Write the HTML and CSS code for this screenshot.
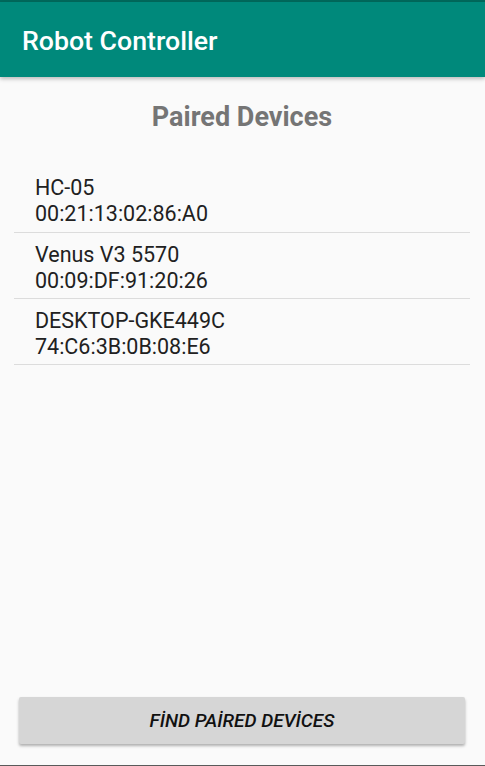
FILE: index.html
```html
<!DOCTYPE html>
<html lang="tr">
<head>
<meta charset="utf-8">
<link rel="stylesheet" href="styles.css">
</head>
<body>
<div class="app">
  <div class="status"></div>
  <header class="toolbar"><h1 class="title">Robot Controller</h1></header>
  <main class="content">
    <h2 class="heading">Paired Devices</h2>
    <ul class="list">
      <li class="item"><span>HC-05</span><span>00:21:13:02:86:A0</span></li>
      <li class="item"><span>Venus V3 5570</span><span>00:09:DF:91:20:26</span></li>
      <li class="item"><span>DESKTOP-GKE449C</span><span>74:C6:3B:0B:08:E6</span></li>
    </ul>
  </main>
  <div class="footer"><button class="btn">FİND PAİRED DEVİCES</button></div>
  <div class="bottom-line"></div>
</div>
</body>
</html>
```
FILE: styles.css
```css
* { box-sizing: border-box; }
html, body { margin: 0; padding: 0; }
body { background: #fafafa; font-family: Roboto, "Noto Sans", sans-serif; }
.app { width: 485px; height: 766px; display: flex; flex-direction: column; overflow: hidden; }
.status { height: 2px; background: #00695c; flex: none; }
.toolbar { height: 75px; background: #00897b; flex: none; display: flex; align-items: center; padding: 2px 22px 0; box-shadow: 0 2px 4px rgba(0,0,0,0.25); position: relative; z-index: 1; }
.title { margin: 0; color: #fff; font-size: 26.7px; font-weight: 500; letter-spacing: 0; }
.content { flex: 1; display: flex; flex-direction: column; padding: 0 15px 0 14px; }
.heading { margin: 25px 0 0; text-align: center; color: #757575; font-size: 27px; font-weight: 700; line-height: 30px; }
.list { list-style: none; margin: 34px 0 0; padding: 0; }
.item { display: flex; flex-direction: column; padding: 9px 0 0 21px; height: 66px; border-bottom: 1px solid #dcdcdc; color: #212121; font-size: 21.5px; line-height: 26px; }
.item:first-child { height: 67px; }
.footer { flex: none; padding: 0 20px 21px 19px; }
.btn { width: 100%; height: 47px; border: none; border-radius: 2px; background: #d6d6d6; box-shadow: 0 2px 3px rgba(0,0,0,0.3); font-family: Roboto, sans-serif; font-size: 19px; font-weight: 500; font-style: italic; color: #111; }
.bottom-line { height: 1px; background: #5a5a5a; flex: none; }
```
